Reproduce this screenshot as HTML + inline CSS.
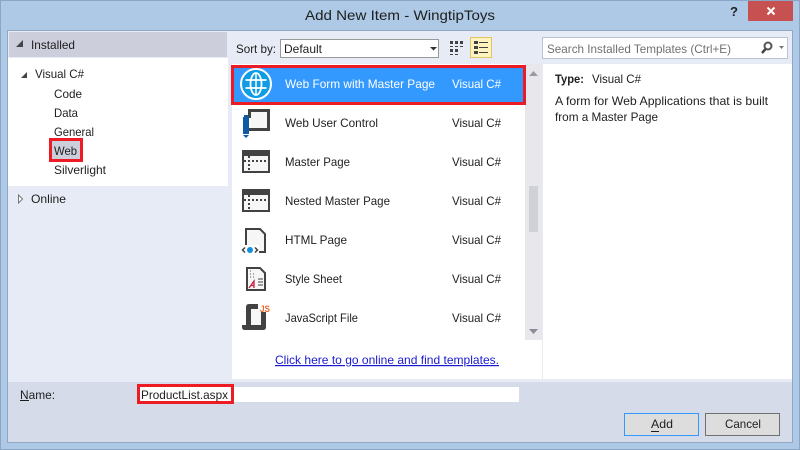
<!DOCTYPE html>
<html><head><meta charset="utf-8"><title>Add New Item</title>
<style>
html,body{margin:0;padding:0;background:#adc9e6;width:800px;height:450px;overflow:hidden}
svg{display:block}
text{font-family:"Liberation Sans",sans-serif;font-size:12px;fill:#1e1e1e}
</style></head><body>
<svg width="800" height="450" viewBox="0 0 800 450" xmlns="http://www.w3.org/2000/svg">
<defs>
<g id="mp"><rect x="0" y="0" width="28" height="23" fill="#424242"/><rect x="2" y="6" width="24" height="15" fill="#f6f6f6"/><path d="M6 6h2v2h-2zM6 10h2v2h-2zM6 14h2v2h-2zM6 18h2v2h-2zM2 10h2v2h-2zM10 10h2v2h-2zM14 10h2v2h-2zM18 10h2v2h-2zM22 10h2v2h-2z" fill="#424242"/></g>
</defs>
<rect width="800" height="450" fill="#adc9e6"/>
<rect x="0.5" y="0.5" width="799" height="449" fill="none" stroke="#8ba6c4"/>
<rect x="7.5" y="30.5" width="785" height="412" fill="#e6ebf5" stroke="#8ea8c6"/>

<text x="305" y="20" textLength="190" lengthAdjust="spacingAndGlyphs" style="font-size:14px">Add New Item - WingtipToys</text>
<text x="730" y="16" textLength="8" lengthAdjust="spacingAndGlyphs" style="font-size:13px;font-weight:bold;fill:#222">?</text>
<rect x="748" y="1" width="45" height="20" fill="#c75050"/>
<path d="M767.500 7.500l7 7M774.500 7.500l-7 7" stroke="#fff" stroke-width="2"/>

<!-- left -->
<rect x="9" y="32" width="218" height="25" fill="#cccedb"/>
<rect x="8" y="58" width="220" height="128" fill="#fff"/>
<path d="M16 47h7v-7z" fill="#444"/>
<text x="31" y="49" textLength="44" lengthAdjust="spacingAndGlyphs">Installed</text>
<path d="M21 78h6v-6z" fill="#444"/>
<text x="35" y="78" textLength="49" lengthAdjust="spacingAndGlyphs">Visual C#</text>
<text x="54" y="98" textLength="28" lengthAdjust="spacingAndGlyphs">Code</text>
<text x="54" y="117" textLength="24" lengthAdjust="spacingAndGlyphs">Data</text>
<text x="54" y="136" textLength="40" lengthAdjust="spacingAndGlyphs">General</text>
<rect x="50.500" y="139.500" width="31" height="21" fill="#cccedb" stroke="#ed1c24" stroke-width="3"/>
<text x="54" y="155" textLength="23" lengthAdjust="spacingAndGlyphs">Web</text>
<text x="54" y="174" textLength="52" lengthAdjust="spacingAndGlyphs">Silverlight</text>
<path d="M18.500 195v8l4-4z" fill="#fff" stroke="#777"/>
<text x="31" y="203" textLength="35" lengthAdjust="spacingAndGlyphs">Online</text>

<!-- toolbar -->
<text x="236" y="53" textLength="40" lengthAdjust="spacingAndGlyphs">Sort by:</text>
<rect x="280.500" y="39.500" width="158" height="18" fill="#fff" stroke="#999"/>
<text x="284" y="53" textLength="38" lengthAdjust="spacingAndGlyphs">Default</text>
<path d="M430 47h7l-3.500 3.500z" fill="#333"/>
<path d="M450 41h3v3h-3zM455 41h3v3h-3zM460 41h3v3h-3zM450 46h3v1h-3zM455 46h3v1h-3zM460 46h3v1h-3zM450 49h3v3h-3zM455 49h3v3h-3zM450 54h3v1h-3zM455 54h3v1h-3z" fill="#424242"/>
<rect x="470.500" y="37.500" width="21" height="20" fill="#fdf4bf" stroke="#e5c365"/>
<path d="M474 41h4v3h-4zM474 46h4v3h-4zM474 51h4v3h-4z" fill="#424242"/>
<path d="M479 42h9v1h-9zM479 47h9v1h-9zM479 52h9v1h-9z" fill="#424242"/>

<rect x="542.500" y="37.500" width="245" height="21" fill="#fff" stroke="#bcc3d3"/>
<text x="547" y="53" textLength="184" lengthAdjust="spacingAndGlyphs" style="fill:#717171">Search Installed Templates (Ctrl+E)</text>
<circle cx="768" cy="46" r="3.500" fill="none" stroke="#555" stroke-width="2"/>
<path d="M765.500 49l-3.500 4" stroke="#444" stroke-width="2.500"/>
<path d="M779 46h5l-2.500 3z" fill="#777"/>

<!-- middle -->
<rect x="232" y="64" width="310" height="315" fill="#fff"/>
<rect x="525" y="64" width="17" height="276" fill="#e8e8ec"/>
<rect x="529" y="186" width="9" height="46" fill="#d0d1d7"/>
<path d="M529 76l4.500-5 4.500 5z" fill="#9a9aa6"/>
<path d="M529 329h9l-4.500 5z" fill="#8a8a9a"/>
<rect x="232.500" y="66.500" width="292" height="37" fill="#3399ff" stroke="#ed1c24" stroke-width="3"/>

<!-- globe -->
<circle cx="256" cy="84" r="15" fill="#0e9ce6" stroke="#fff" stroke-width="2"/>
<ellipse cx="256" cy="84" rx="5.500" ry="11" fill="none" stroke="#fff" stroke-width="1.800"/>
<path d="M245.500 80h21M245.500 88h21" stroke="#fff" stroke-width="1.800"/>
<path d="M256 73v22" stroke="#fff" stroke-width="1.500"/>
<text x="285" y="88" textLength="150" lengthAdjust="spacingAndGlyphs" style="fill:#fff">Web Form with Master Page</text>
<text x="452" y="88" textLength="49" lengthAdjust="spacingAndGlyphs" style="fill:#fff">Visual C#</text>

<!-- web user control -->
<path d="M248 109h22v22h-21v-3h18v-16h-16v6h-3z" fill="#424242"/>
<rect x="251" y="112" width="16" height="16" fill="#f6f6f6"/>
<rect x="243" y="117" width="6" height="17" fill="#0e5aa7"/>
<rect x="244" y="115" width="4" height="2" fill="#0e5aa7"/>
<path d="M243 135h6l-3 3z" fill="#0e5aa7"/>
<text x="285" y="127" textLength="93" lengthAdjust="spacingAndGlyphs">Web User Control</text>
<text x="452" y="127" textLength="49" lengthAdjust="spacingAndGlyphs">Visual C#</text>

<use href="#mp" x="242" y="150"/>
<text x="285" y="166" textLength="65" lengthAdjust="spacingAndGlyphs">Master Page</text>
<text x="452" y="166" textLength="49" lengthAdjust="spacingAndGlyphs">Visual C#</text>

<use href="#mp" x="242" y="189"/>
<text x="285" y="205" textLength="105" lengthAdjust="spacingAndGlyphs">Nested Master Page</text>
<text x="452" y="205" textLength="49" lengthAdjust="spacingAndGlyphs">Visual C#</text>

<!-- html -->
<path d="M247 229h13l5 5v18h-19v-23z" fill="#f6f6f6" stroke="#424242" stroke-width="2"/>
<rect x="241" y="245" width="18" height="9" fill="#fff"/>
<circle cx="250" cy="250" r="3" fill="#0e90dc"/>
<path d="M245 247.500l-2.500 2.500 2.500 2.500M255 247.500l2.500 2.500-2.500 2.500" fill="none" stroke="#424242" stroke-width="1.500"/>
<text x="285" y="244" textLength="62" lengthAdjust="spacingAndGlyphs">HTML Page</text>
<text x="452" y="244" textLength="49" lengthAdjust="spacingAndGlyphs">Visual C#</text>

<!-- css -->
<path d="M247 268h13l5 5v17h-18v-22z" fill="#f6f6f6" stroke="#424242" stroke-width="2"/>
<path d="M250 271h1M250 274h1M253 274h1M250 277h1M253 277h1" stroke="#555" stroke-width="1"/>
<path d="M258 279h5M258 282h5M258 285h5" stroke="#424242" stroke-width="1"/>
<path d="M249 288l5-7v7M250.500 285.500h4" fill="none" stroke="#c4213a" stroke-width="1.300"/>
<text x="285" y="283" textLength="57" lengthAdjust="spacingAndGlyphs">Style Sheet</text>
<text x="452" y="283" textLength="49" lengthAdjust="spacingAndGlyphs">Visual C#</text>

<!-- js -->
<rect x="251" y="309" width="10" height="16" fill="#f6f6f6"/>
<path d="M249 304h9v5h-7v16h10v-13h5v15q0 3-3 3h-18q-3 0-3-3v-2h4v-18q0-3 3-3z" fill="#424242"/>
<text x="260" y="312" textLength="10" lengthAdjust="spacingAndGlyphs" style="font-size:9px;font-weight:bold;fill:#f0682a">JS</text>
<text x="285" y="322" textLength="73" lengthAdjust="spacingAndGlyphs">JavaScript File</text>
<text x="452" y="322" textLength="49" lengthAdjust="spacingAndGlyphs">Visual C#</text>

<text x="275" y="364" textLength="224" lengthAdjust="spacingAndGlyphs" style="fill:#1a1ad0;text-decoration:underline">Click here to go online and find templates.</text>

<!-- right -->
<rect x="543" y="64" width="249" height="315" fill="#fff"/>
<text x="555" y="83" textLength="29" lengthAdjust="spacingAndGlyphs" style="font-weight:bold">Type:</text>
<text x="592" y="83" textLength="49" lengthAdjust="spacingAndGlyphs">Visual C#</text>
<text x="555" y="105" textLength="213" lengthAdjust="spacingAndGlyphs">A form for Web Applications that is built</text>
<text x="555" y="121" textLength="103" lengthAdjust="spacingAndGlyphs">from a Master Page</text>

<!-- bottom -->
<rect x="8" y="382" width="784" height="60" fill="#d6dbe9"/>
<text x="20" y="399" textLength="35" lengthAdjust="spacingAndGlyphs">Name:</text>
<rect x="20" y="400" width="9" height="1" fill="#1e1e1e"/>
<rect x="137" y="387" width="382" height="15" fill="#fff"/>
<rect x="138.500" y="385.500" width="94" height="17" fill="#fff" stroke="#ed1c24" stroke-width="3"/>
<text x="141" y="399" textLength="87" lengthAdjust="spacingAndGlyphs">ProductList.aspx</text>
<rect x="624.500" y="413.500" width="74" height="22" fill="#dddddd" stroke="#3399ff"/>
<text x="651" y="428" textLength="22" lengthAdjust="spacingAndGlyphs">Add</text>
<rect x="651" y="431" width="8" height="1" fill="#1e1e1e"/>
<rect x="705.500" y="413.500" width="74" height="22" fill="#dddddd" stroke="#707070"/>
<text x="725" y="428" textLength="36" lengthAdjust="spacingAndGlyphs">Cancel</text>
</svg>
</body></html>
